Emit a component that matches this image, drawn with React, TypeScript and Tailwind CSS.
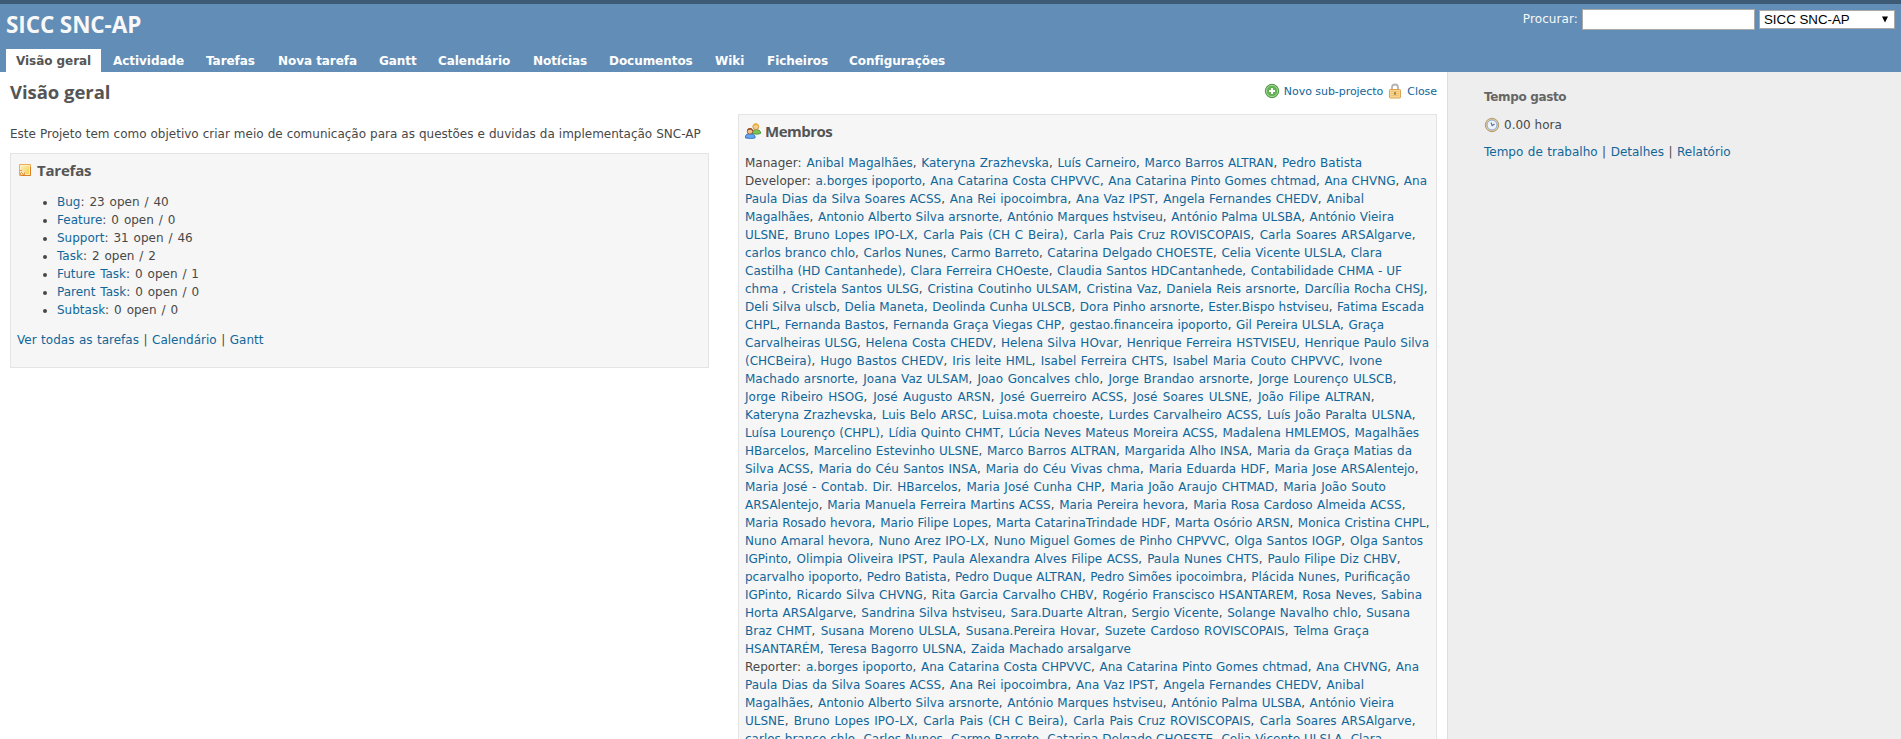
import React from "react";

type Line = [text: string, width: number];

const developerLines: Line[] = [
  ["a.borges ipoporto, Ana Catarina Costa CHPVVC, Ana Catarina Pinto Gomes chtmad, Ana CHVNG, Ana", 682],
  ["Paula Dias da Silva Soares ACSS, Ana Rei ipocoimbra, Ana Vaz IPST, Angela Fernandes CHEDV, Anibal", 619],
  ["Magalhães, Antonio Alberto Silva arsnorte, António Marques hstviseu, António Palma ULSBA, António Vieira", 649],
  ["ULSNE, Bruno Lopes IPO-LX, Carla Pais (CH C Beira), Carla Pais Cruz ROVISCOPAIS, Carla Soares ARSAlgarve,", 671],
  ["carlos branco chlo, Carlos Nunes, Carmo Barreto, Catarina Delgado CHOESTE, Celia Vicente ULSLA, Clara", 637],
  ["Castilha (HD Cantanhede), Clara Ferreira CHOeste, Claudia Santos HDCantanhede, Contabilidade CHMA - UF", 657],
  ["chma , Cristela Santos ULSG, Cristina Coutinho ULSAM, Cristina Vaz, Daniela Reis arsnorte, Darcília Rocha CHSJ,", 683],
  ["Deli Silva ulscb, Delia Maneta, Deolinda Cunha ULSCB, Dora Pinho arsnorte, Ester.Bispo hstviseu, Fatima Escada", 679],
  ["CHPL, Fernanda Bastos, Fernanda Graça Viegas CHP, gestao.financeira ipoporto, Gil Pereira ULSLA, Graça", 639],
  ["Carvalheiras ULSG, Helena Costa CHEDV, Helena Silva HOvar, Henrique Ferreira HSTVISEU, Henrique Paulo Silva", 684],
  ["(CHCBeira), Hugo Bastos CHEDV, Iris leite HML, Isabel Ferreira CHTS, Isabel Maria Couto CHPVVC, Ivone", 637],
  ["Machado arsnorte, Joana Vaz ULSAM, Joao Goncalves chlo, Jorge Brandao arsnorte, Jorge Lourenço ULSCB,", 652],
  ["Jorge Ribeiro HSOG, José Augusto ARSN, José Guerreiro ACSS, José Soares ULSNE, João Filipe ALTRAN,", 630],
  ["Kateryna Zrazhevska, Luis Belo ARSC, Luisa.mota choeste, Lurdes Carvalheiro ACSS, Luís João Paralta ULSNA,", 671],
  ["Luísa Lourenço (CHPL), Lídia Quinto CHMT, Lúcia Neves Mateus Moreira ACSS, Madalena HMLEMOS, Magalhães", 674],
  ["HBarcelos, Marcelino Estevinho ULSNE, Marco Barros ALTRAN, Margarida Alho INSA, Maria da Graça Matias da", 667],
  ["Silva ACSS, Maria do Céu Santos INSA, Maria do Céu Vivas chma, Maria Eduarda HDF, Maria Jose ARSAlentejo,", 674],
  ["Maria José - Contab. Dir. HBarcelos, Maria José Cunha CHP, Maria João Araujo CHTMAD, Maria João Souto", 641],
  ["ARSAlentejo, Maria Manuela Ferreira Martins ACSS, Maria Pereira hevora, Maria Rosa Cardoso Almeida ACSS,", 661],
  ["Maria Rosado hevora, Mario Filipe Lopes, Marta CatarinaTrindade HDF, Marta Osório ARSN, Monica Cristina CHPL,", 685],
  ["Nuno Amaral hevora, Nuno Arez IPO-LX, Nuno Miguel Gomes de Pinho CHPVVC, Olga Santos IOGP, Olga Santos", 678],
  ["IGPinto, Olimpia Oliveira IPST, Paula Alexandra Alves Filipe ACSS, Paula Nunes CHTS, Paulo Filipe Diz CHBV,", 656],
  ["pcarvalho ipoporto, Pedro Batista, Pedro Duque ALTRAN, Pedro Simões ipocoimbra, Plácida Nunes, Purificação", 665],
  ["IGPinto, Ricardo Silva CHVNG, Rita Garcia Carvalho CHBV, Rogério Franscisco HSANTAREM, Rosa Neves, Sabina", 677],
  ["Horta ARSAlgarve, Sandrina Silva hstviseu, Sara.Duarte Altran, Sergio Vicente, Solange Navalho chlo, Susana", 665],
  ["Braz CHMT, Susana Moreno ULSLA, Susana.Pereira Hovar, Suzete Cardoso ROVISCOPAIS, Telma Graça", 624],
  ["HSANTARÉM, Teresa Bagorro ULSNA, Zaida Machado arsalgarve", 386],
];

const reporterLines: Line[] = [[developerLines[0][0], 674], ...developerLines.slice(1, 5)];

const roles: { role: string; lines: Line[] }[] = [
  { role: "Manager", lines: [["Anibal Magalhães, Kateryna Zrazhevska, Luís Carneiro, Marco Barros ALTRAN, Pedro Batista", 617]] },
  { role: "Developer", lines: developerLines },
  { role: "Reporter", lines: reporterLines },
];

const tabs = [
  { label: "Visão geral", width: "w-[95px] mr-[2px]" },
  { label: "Actividade", width: "w-[93px]" },
  { label: "Tarefas", width: "w-[72px]" },
  { label: "Nova tarefa", width: "w-[101px]" },
  { label: "Gantt", width: "w-[59px]" },
  { label: "Calendário", width: "w-[95px]" },
  { label: "Notícias", width: "w-[76px]" },
  { label: "Documentos", width: "w-[106px]" },
  { label: "Wiki", width: "w-[52px]" },
  { label: "Ficheiros", width: "w-[82px]" },
  { label: "Configurações", width: "w-[116px]" },
];

const trackers = [
  ["Bug", "23 open / 40"],
  ["Feature", "0 open / 0"],
  ["Support", "31 open / 46"],
  ["Task", "2 open / 2"],
  ["Future Task", "0 open / 1"],
  ["Parent Task", "0 open / 0"],
  ["Subtask", "0 open / 0"],
];

function A({ children }: { children: React.ReactNode }) {
  return <a className="text-[#169]">{children}</a>;
}

function Names({ line }: { line: string }) {
  const parts = line.split(",");
  return (
    <>
      {parts.map((p, i) => (
        <React.Fragment key={i}>
          <A>{p}</A>
          {i < parts.length - 1 && <span className="tracking-[0.5px]">,</span>}
        </React.Fragment>
      ))}
    </>
  );
}

function NoteIcon() {
  return (
    <svg width="16" height="16" viewBox="0 0 16 16">
      <defs>
        <linearGradient id="note" x1="0" y1="0" x2="1" y2="1">
          <stop offset="0" stopColor="#fdf3c8" />
          <stop offset="1" stopColor="#f5c93f" />
        </linearGradient>
      </defs>
      <path d="M2.500 2.500h11v11h-11z" fill="url(#note)" stroke="#efaa58" />
      <path d="M3.500 8v-4.500h9v9H8" fill="none" stroke="#fff0c0" />
      <path d="M3 8.500h4.500V13H3z" fill="#fbe3b8" />
      <path d="M3 8.500h2M4 10l3 3M7.500 10.500V13H5M3.500 11v2" fill="none" stroke="#e59a45" />
      <path d="M13.500 5v8.500H4" fill="none" stroke="#dd7f22" />
    </svg>
  );
}

function GroupIcon() {
  return (
    <svg width="16" height="16" viewBox="0 0 16 16">
      <path d="M7.500 10.500V8.500Q8 6.500 11 6.500q4 0 4.500 2.500v1.500q-3 1.500-8 0z" fill="#7cc455" stroke="#3f8f2c" strokeWidth=".8" />
      <circle cx="10.800" cy="3.700" r="2.900" fill="#f5cf98" stroke="#c8862a" strokeWidth=".8" />
      <path d="M7.700 4.500Q7.600.5 10.800.5t3.200 4q-1-2.300-3-2.300-2.300 0-3.300 2.300z" fill="#efb030" />
      <path d="M.5 15v-2q.5-2.500 4.500-2.500t5 2.500v2q-4 1-9.500 0z" fill="#62a8f0" stroke="#2c66b8" strokeWidth=".8" />
      <circle cx="5" cy="8.300" r="2.800" fill="#f3c193" stroke="#8a4b22" strokeWidth=".8" />
      <path d="M2 8.500Q2 5 5 5t3 3.500Q7 6.800 5 6.800T2 8.500z" fill="#9a5526" />
    </svg>
  );
}

function AddIcon() {
  return (
    <svg width="16" height="16" viewBox="0 0 16 16">
      <circle cx="8" cy="8" r="6.700" fill="#62b152" stroke="#4f9a44" />
      <circle cx="8" cy="8" r="5.600" fill="none" stroke="#a5d69a" strokeWidth="1" />
      <path d="M8 5v6M5 8h6" stroke="#fff" strokeWidth="2" />
    </svg>
  );
}

function LockIcon() {
  return (
    <svg width="16" height="16" viewBox="0 0 16 16">
      <path d="M5 7V4.500q0-3 3-3t3 3V7" fill="none" stroke="#b4b4b4" strokeWidth="1.800" />
      <rect x="2.500" y="6.500" width="11" height="8.500" rx=".8" fill="#f6d68f" stroke="#dda350" />
      <path d="M4 8.500h8M4 10.500h8M4 12.500h8" stroke="#ebbd6c" strokeWidth=".8" />
      <path d="M8 9v3" stroke="#8a652c" strokeWidth="1.200" />
    </svg>
  );
}

function ClockIcon() {
  return (
    <svg width="16" height="16" viewBox="0 0 16 16">
      <circle cx="8" cy="8" r="6.700" fill="#e6cf9c" stroke="#b39b6c" />
      <circle cx="8" cy="8" r="5" fill="#eef4fc" stroke="#86a6d2" />
      <path d="M7 5.500l1.200 3.200L10.500 7" fill="none" stroke="#5a6b84" strokeWidth="1.100" />
    </svg>
  );
}

export default function App() {
  return (
    <div className="flex h-[739px] flex-col overflow-hidden bg-white font-['DejaVu_Sans',sans-serif] text-[12px] leading-[18px] whitespace-nowrap text-[#484848]">
      <div className="h-1 shrink-0 bg-[#3e5b76]" />
      <header className="flex h-[68px] shrink-0 flex-col justify-between bg-[#628db6] pl-[6px] text-[#f8f8f8]">
        <div className="flex justify-between">
          <h1 className="pt-[5px] font-['Open_Sans',sans-serif] text-[22.5px] leading-[32px] font-bold tracking-[-0.1px]">SICC SNC-AP</h1>
          <div className="flex items-start pt-[5px] pr-[6px]">
            <label className="mr-[4px] pt-[1px] tracking-[0.1px]">Procurar:</label>
            <div className="mr-1 h-[21px] w-[173px] border border-[#a9a9a9] bg-white" />
            <div className="mt-px flex h-[19px] w-[136px] items-center justify-between border border-[#a9a9a9] bg-white pr-[5px] pl-1 font-['Liberation_Sans',sans-serif] text-[13.3px] tracking-normal text-black">
              SICC SNC-AP
              <svg width="8" height="7" viewBox="0 0 8 7"><path d="M1 .500h6L4 6.500z" fill="#000" /></svg>
            </div>
          </div>
        </div>
        <nav className="flex font-bold tracking-[-0.05px]">
          {tabs.map((t, i) => (
            <a key={t.label} className={`${t.width} h-[23px] shrink-0 pt-[3px] pl-[10px] ${i === 0 ? "bg-white text-[#555]" : "text-white"}`}>
              {t.label}
            </a>
          ))}
        </nav>
      </header>
      <div className="flex min-h-0 flex-1">
        <main className="flex w-[1447px] shrink-0 gap-[29px] pl-[10px]">
          <section className="w-[699px] shrink-0">
            <h2 className="pt-[6px] font-['Open_Sans',sans-serif] text-[18.5px] leading-[28px] font-bold tracking-[-0.05px] text-[#555]">Visão geral</h2>
            <p className="mt-[19px] [word-spacing:0.2px]">Este Projeto tem como objetivo criar meio de comunicação para as questões e duvidas da implementação SNC-AP</p>
            <div className="mt-[10px] h-[215px] border border-[#e4e4e4] bg-[#f6f6f6] pl-[6px]">
              <h3 className="flex items-center gap-[4px] pt-[5px] font-['Open_Sans',sans-serif] text-[15px] leading-[22px] font-bold tracking-[-0.2px] text-[#555]">
                <NoteIcon />
                Tarefas
              </h3>
              <ul className="mt-[12px] list-disc pl-[40px] [word-spacing:1.1px]">
                {trackers.map(([name, count]) => (
                  <li key={name}><A>{name}</A>: {count}</li>
                ))}
              </ul>
              <p className="mt-[12px] [word-spacing:0.7px]"><A>Ver todas as tarefas</A> | <A>Calendário</A> | <A>Gantt</A></p>
            </div>
          </section>
          <section className="w-[699px] shrink-0">
            <div className="flex h-[42px] items-start justify-end pt-[11px] text-[11px] tracking-[-0.05px]">
              <AddIcon /><span className="mr-[4px] ml-[4px]"><A>Novo sub-projecto</A></span>
              <LockIcon /><span className="ml-[4px]"><A>Close</A></span>
            </div>
            <div className="h-[700px] border border-[#e4e4e4] bg-[#f6f6f6] pl-[6px]">
              <h3 className="flex items-center gap-[4px] pt-[5px] font-['Open_Sans',sans-serif] text-[15px] leading-[22px] font-bold tracking-[-0.5px] text-[#555]">
                <GroupIcon />
                Membros
              </h3>
              <div className="mt-[12px] [word-spacing:-1px]">
                {roles.map(({ role, lines }) =>
                  lines.map(([text, width], i) => (
                    <div key={role + i} className="whitespace-normal [text-align-last:justify]" style={{ width }}>
                      {i === 0 && <>{role}<span className="tracking-[0.7px]">:</span> </>}
                      <Names line={text} />
                    </div>
                  )),
                )}
              </div>
            </div>
          </section>
        </main>
        <aside className="flex-1 border-l border-[#ddd] bg-[#eee] pl-[36px]">
          <h3 className="pt-[16px] text-[12px] font-bold tracking-[-0.35px] text-[#666]">Tempo gasto</h3>
          <p className="mt-[10px] flex items-center gap-1"><ClockIcon />0.00 hora</p>
          <p className="mt-[9px] [word-spacing:0.7px]"><A>Tempo de trabalho</A> | <A>Detalhes</A> | <A>Relatório</A></p>
        </aside>
      </div>
    </div>
  );
}
